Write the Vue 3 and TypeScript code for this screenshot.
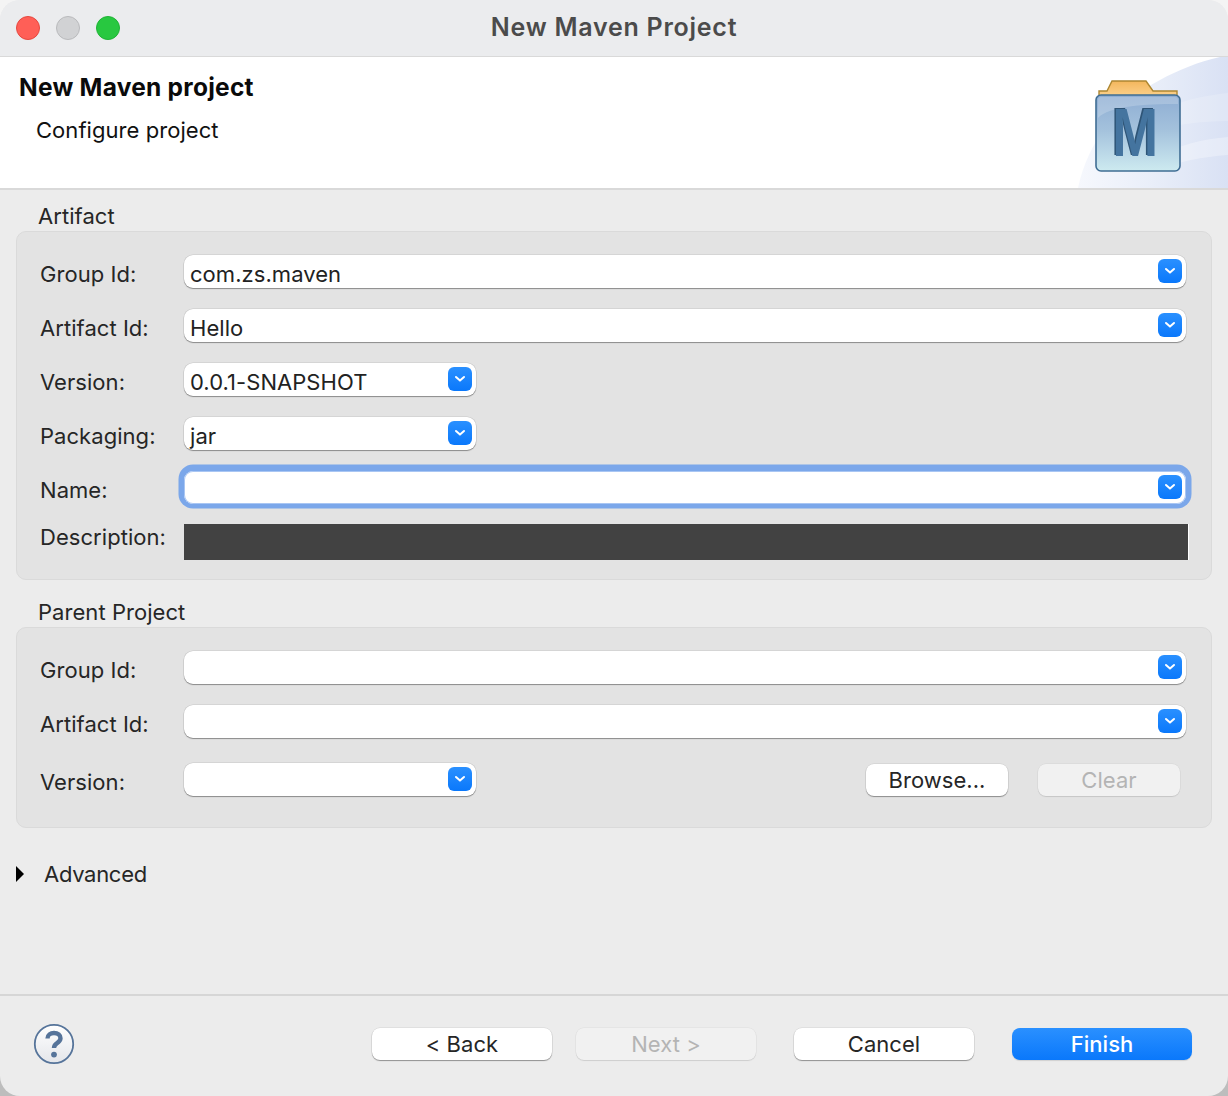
<script setup lang="ts">
const artifactWide = [
  { label: 'Group Id:', value: 'com.zs.maven' },
  { label: 'Artifact Id:', value: 'Hello' },
]
const artifactNarrow = [
  { label: 'Version:', value: '0.0.1-SNAPSHOT' },
  { label: 'Packaging:', value: 'jar' },
]
const parentWide = ['Group Id:', 'Artifact Id:']
</script>

<template>
  <div class="window">
    <header class="titlebar">
      <div class="lights">
        <span class="light red"></span>
        <span class="light gray"></span>
        <span class="light green"></span>
      </div>
      <div class="title">New Maven Project</div>
    </header>

    <section class="banner">
      <svg class="swoosh" width="160" height="131" viewBox="0 0 160 131" aria-hidden="true">
        <defs>
          <linearGradient id="sw" x1="0" y1="0" x2="1" y2="0">
            <stop offset="0" stop-color="#f6f8fd" />
            <stop offset="0.5" stop-color="#e9eef9" />
            <stop offset="1" stop-color="#d9e1f4" />
          </linearGradient>
        </defs>
        <path d="M10 131C20 85 50 45 92 23C110 13 130 5 152 0H160V131Z" fill="url(#sw)" />
        <path d="M100 50C120 42 140 38 160 36V64C140 64 120 66 100 70Z" fill="#ffffff" opacity=".18" />
        <path d="M90 100C110 88 135 82 160 80V98C135 100 110 104 90 114Z" fill="#ffffff" opacity=".3" />
      </svg>
      <div class="banner-text">
        <h1>New Maven project</h1>
        <p>Configure project</p>
      </div>
      <svg class="maven" width="88" height="94" viewBox="0 0 88 94" aria-hidden="true">
        <defs>
          <linearGradient id="tab" x1="0" y1="0" x2="0" y2="1">
            <stop offset="0" stop-color="#f3b65c" />
            <stop offset="1" stop-color="#fbd08a" />
          </linearGradient>
          <linearGradient id="face" x1="0" y1="0" x2="0" y2="1">
            <stop offset="0" stop-color="#8eadd3" />
            <stop offset="0.45" stop-color="#a3c1dc" />
            <stop offset="1" stop-color="#cdeaf0" />
          </linearGradient>
        </defs>
        <path d="M4 18V13H12L17 3H51L58 13H82V18Z" fill="url(#tab)" stroke="#ad8732" stroke-width="1.4" />
        <rect x="1" y="17" width="84" height="76" rx="5" fill="url(#face)" stroke="#3f6d93" stroke-width="1.6" />
        <path d="M3 40V22Q3 19 6 19H80Q83 19 83 22V26C50 26 14 28 3 40Z" fill="#ffffff" opacity=".2" />
        <text transform="translate(38.8 77) scale(.81 1)" text-anchor="middle" class="m-shadow">M</text>
        <text transform="translate(40.3 78) scale(.81 1)" text-anchor="middle" class="m-letter">M</text>
      </svg>
    </section>

    <main class="content">
      <div class="group-title">Artifact</div>
      <div class="group artifact">
        <div v-for="row in artifactWide" :key="row.label" class="row">
          <label class="label">{{ row.label }}</label>
          <div class="combo wide">
            <span class="value">{{ row.value }}</span>
            <span class="arrow"><svg width="12" height="8" viewBox="0 0 12 8"><path d="M2 2l4 3.6L10 2" /></svg></span>
          </div>
        </div>
        <div v-for="row in artifactNarrow" :key="row.label" class="row">
          <label class="label">{{ row.label }}</label>
          <div class="combo narrow">
            <span class="value">{{ row.value }}</span>
            <span class="arrow"><svg width="12" height="8" viewBox="0 0 12 8"><path d="M2 2l4 3.6L10 2" /></svg></span>
          </div>
        </div>
        <div class="row">
          <label class="label">Name:</label>
          <div class="combo wide focused">
            <span class="value"></span>
            <span class="arrow"><svg width="12" height="8" viewBox="0 0 12 8"><path d="M2 2l4 3.6L10 2" /></svg></span>
          </div>
        </div>
        <div class="row desc-row">
          <label class="label">Description:</label>
          <div class="desc"></div>
        </div>
      </div>

      <div class="group-title second">Parent Project</div>
      <div class="group parent">
        <div v-for="label in parentWide" :key="label" class="row">
          <label class="label">{{ label }}</label>
          <div class="combo wide">
            <span class="value"></span>
            <span class="arrow"><svg width="12" height="8" viewBox="0 0 12 8"><path d="M2 2l4 3.6L10 2" /></svg></span>
          </div>
        </div>
        <div class="row version-row">
          <label class="label">Version:</label>
          <div class="combo narrow">
            <span class="value"></span>
            <span class="arrow"><svg width="12" height="8" viewBox="0 0 12 8"><path d="M2 2l4 3.6L10 2" /></svg></span>
          </div>
          <button class="btn browse">Browse...</button>
          <button class="btn clear disabled">Clear</button>
        </div>
      </div>

      <div class="advanced">
        <span class="triangle"></span>
        <span class="advanced-text">Advanced</span>
      </div>
    </main>

    <footer class="footer">
      <svg class="help" width="42" height="42" viewBox="0 0 42 42" aria-hidden="true">
        <defs>
          <linearGradient id="hb" x1="0" y1="0" x2="0" y2="1">
            <stop offset="0" stop-color="#ffffff" />
            <stop offset="1" stop-color="#e4e6ea" />
          </linearGradient>
        </defs>
        <circle cx="21" cy="21" r="19.2" fill="url(#hb)" stroke="#56749a" stroke-width="1.8" />
        <path d="M14.5 15.5C14.5 12 17.5 10 21 10C25 10 27.5 12.3 27.5 15.3C27.5 18 25.5 19.3 23.5 20.6C21.7 21.8 21 23 21 25" fill="none" stroke="#56749a" stroke-width="4.4" />
        <circle cx="21" cy="31.6" r="2.9" fill="#56749a" />
      </svg>
      <div class="actions">
        <button class="btn wide-btn">&lt; Back</button>
        <button class="btn wide-btn disabled">Next &gt;</button>
        <button class="btn wide-btn cancel">Cancel</button>
        <button class="btn wide-btn primary">Finish</button>
      </div>
    </footer>
  </div>
</template>

<style>
html, body { margin: 0; }
html { background: linear-gradient(#f4f4f4 0, #f4f4f4 50%, #bdbdbd 50%, #bdbdbd 100%); }
</style>

<style scoped>
.window {
  width: 1228px;
  height: 1096px;
  box-sizing: border-box;
  display: flex;
  flex-direction: column;
  background: #ececec;
  border-radius: 20px;
  overflow: hidden;
  font-family: Inter, "Noto Sans", "Liberation Sans", sans-serif;
  font-size: 22px;
  letter-spacing: .05px;
  color: #262626;
}
.titlebar {
  height: 57px;
  flex: none;
  box-sizing: border-box;
  background: #ebecee;
  border-bottom: 1px solid #d9d9d9;
  display: flex;
  align-items: center;
  justify-content: center;
  position: relative;
}
.lights {
  position: absolute;
  left: 16px;
  top: 16px;
  display: flex;
  gap: 16px;
}
.light {
  width: 24px;
  height: 24px;
  box-sizing: border-box;
  border-radius: 50%;
  border: 1px solid transparent;
}
.red { background: #ff5f57; border-color: #e5483f; }
.gray { background: #d1d2d4; border-color: #b9babc; }
.green { background: #28c840; border-color: #1fb335; }
.title {
  font-size: 25px;
  font-weight: 600;
  letter-spacing: .75px;
  color: #4b4b4b;
  margin-top: -3px;
}
.banner {
  height: 133px;
  flex: none;
  box-sizing: border-box;
  background: #fff;
  border-bottom: 2px solid #d9d9d9;
  display: flex;
  justify-content: space-between;
  position: relative;
  overflow: hidden;
}
.swoosh {
  position: absolute;
  right: 0;
  top: 0;
}
.banner-text { position: relative; }
.banner-text h1 {
  margin: 15px 0 0 19px;
  font-size: 24.5px;
  line-height: 30px;
  font-weight: 700;
  letter-spacing: .25px;
  color: #0a0a0a;
}
.banner-text p {
  margin: 13px 0 0 36px;
  font-size: 22px;
  line-height: 30px;
  color: #111;
}
.maven {
  position: relative;
  margin: 21px 45px 0 0;
}
.m-letter, .m-shadow {
  font-family: "Liberation Sans", sans-serif;
  font-weight: 700;
  font-size: 68px;
}
.m-letter { fill: #44749f; }
.m-shadow { fill: #2f5577; }
.content {
  flex: 1;
  padding: 0 16px;
  min-height: 0;
}
.group-title {
  margin: 12px 0 0 22px;
  height: 29px;
  line-height: 28px;
}
.group-title.second {
  margin-top: 18px;
  height: 29px;
}
.group {
  box-sizing: border-box;
  background: #e3e3e3;
  border: 1px solid #dadada;
  border-radius: 10px;
  padding: 23px 25px 0 23px;
  display: flex;
  flex-direction: column;
  gap: 21px;
}
.artifact { height: 349px; }
.parent { height: 201px; }
.row {
  display: flex;
  align-items: center;
  height: 33px;
}
.label {
  width: 144px;
  flex: none;
  padding-top: 4px;
}
.combo {
  box-sizing: border-box;
  height: 33px;
  background: #fff;
  border-radius: 9px;
  box-shadow: 0 0 0 .5px rgba(0, 0, 0, .12), 0 1px 1px rgba(0, 0, 0, .35);
  display: flex;
  align-items: center;
  justify-content: space-between;
  padding: 0 4px 0 6px;
}
.wide { flex: 1; }
.narrow { width: 292px; flex: none; }
.focused {
  box-shadow: inset 0 0 0 1px #a9c6f3, 0 -1px 0 5.5px #7ba7ea;
}
.value { padding-top: 5px; color: #222; }
.arrow {
  width: 24px;
  height: 24px;
  margin-top: -1px;
  border-radius: 6px;
  background: linear-gradient(#2a90ff, #0a78fb);
  display: flex;
  align-items: center;
  justify-content: center;
}
.arrow path {
  fill: none;
  stroke: #fff;
  stroke-width: 2;
  stroke-linecap: round;
  stroke-linejoin: round;
}
.desc-row {
  height: 36px;
  margin-top: -1px;
  align-items: flex-start;
}
.desc-row .label { padding-top: 0; line-height: 26px; }
.desc {
  flex: 1;
  height: 36px;
  margin-right: -3px;
  background: #424242;
  border-right: 1px solid #fff;
}
.version-row { margin-top: 4px; }
.btn {
  box-sizing: border-box;
  height: 32px;
  padding: 0;
  border: none;
  border-radius: 8px;
  background: #fff;
  font: inherit;
  letter-spacing: inherit;
  color: #262626;
  box-shadow: 0 0 0 .5px rgba(0, 0, 0, .1), 0 1px 1px rgba(0, 0, 0, .35);
}
.btn.disabled {
  background: #f1f1f1;
  color: #b4b4b4;
  box-shadow: 0 0 0 .5px rgba(0, 0, 0, .06), 0 1px 1px rgba(0, 0, 0, .1);
}
.browse { width: 142px; margin-left: auto; }
.clear { width: 142px; margin: 0 6px 0 30px; }
.advanced {
  display: flex;
  align-items: center;
  margin-top: 32px;
  height: 28px;
}
.advanced-text { letter-spacing: -.3px; }
.triangle {
  width: 0;
  height: 0;
  border-left: 8px solid #000;
  border-top: 8px solid transparent;
  border-bottom: 8px solid transparent;
  margin-right: 20px;
}
.footer {
  height: 102px;
  flex: none;
  box-sizing: border-box;
  border-top: 2px solid #d6d6d6;
  padding-top: 31px;
  display: flex;
  align-items: flex-start;
  justify-content: space-between;
  position: relative;
}
.help { margin: -4px 0 0 33px; }
.actions {
  display: flex;
  margin: 1px 36px 0 0;
}
.wide-btn { width: 180px; }
.wide-btn + .wide-btn { margin-left: 24px; }
.cancel { margin-left: 38px !important; }
.wide-btn.cancel + .primary { margin-left: 38px; }
.primary {
  background: linear-gradient(#2a90ff, #0a78fb);
  color: #fff;
  font-weight: 500;
  box-shadow: 0 1px 1px rgba(0, 0, 0, .12);
}
</style>
